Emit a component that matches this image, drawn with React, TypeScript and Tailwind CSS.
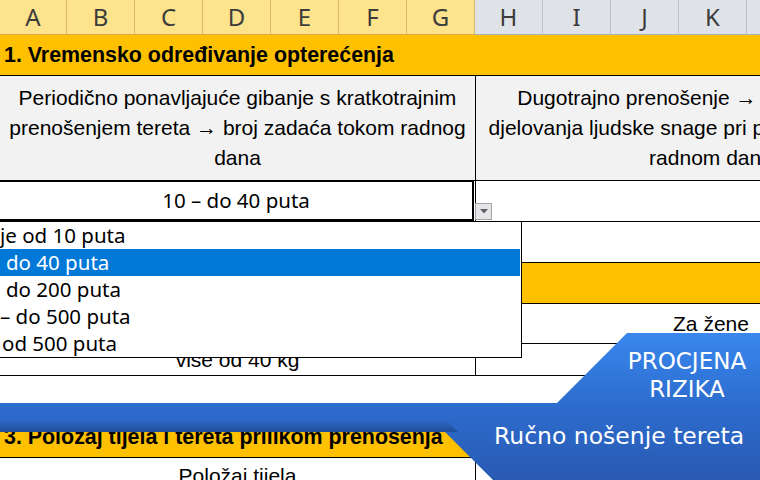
const COLS = ["A", "B", "C", "D", "E", "F", "G", "H", "I", "J", "K", "L"];
const SELECTED = 7;

const OPTIONS = [
	{ label: "je od 10 puta", pad: "pl-0", active: false },
	{ label: "do 40 puta", pad: "pl-[6px]", active: true },
	{ label: "do 200 puta", pad: "pl-[6px]", active: false },
	{ label: "– do 500 puta", pad: "pl-0", active: false },
	{ label: "od 500 puta", pad: "pl-[2px]", active: false },
];

function ColumnHeaders() {
	return (
		<div className="flex h-[35px] font-['Noto_Sans',sans-serif] text-[24px] text-[#3c3c3c]">
			{COLS.map((c, i) => (
				<div
					key={c}
					className={
						i < SELECTED
							? `flex shrink-0 items-center justify-center border-r border-b border-r-[#dcb66a] border-b-[#dca844] bg-[#fde48c] ${i === 0 ? "w-[67px]" : "w-[68px]"}`
							: "flex w-[68px] shrink-0 items-center justify-center border-r border-b border-r-[#bcc2ca] border-b-[#a9b1bb] bg-[#dfe3e8]"
					}
				>
					{c}
				</div>
			))}
		</div>
	);
}

function Banner() {
	return (
		<>
			<svg
				className="pointer-events-none absolute top-0 left-0"
				width="760"
				height="480"
				viewBox="0 0 760 480"
			>
				<defs>
					<linearGradient id="bn" x1="0" y1="333" x2="0" y2="480" gradientUnits="userSpaceOnUse">
						<stop offset="0" stopColor="#3987ed" />
						<stop offset="0.48" stopColor="#2d6dcf" />
						<stop offset="1" stopColor="#295ab2" />
					</linearGradient>
					<linearGradient id="sh" x1="0" y1="420" x2="0" y2="432" gradientUnits="userSpaceOnUse">
						<stop offset="0" stopColor="#102850" stopOpacity="0" />
						<stop offset="1" stopColor="#102850" stopOpacity="0.4" />
					</linearGradient>
				</defs>
				<polygon
					points="0,403 557,403 627,333 760,333 760,480 493,480 445,432 0,432"
					fill="url(#bn)"
				/>
				<polygon points="0,420 446,420 458,432 0,432" fill="url(#sh)" />
			</svg>
			<div className="absolute top-[347px] left-[607px] flex w-[160px] flex-col items-center font-['DejaVu_Sans',sans-serif] text-[23px] leading-[28px] text-white">
				<span>PROCJENA</span>
				<span>RIZIKA</span>
			</div>
			<div className="absolute top-[422px] left-[494px] font-['DejaVu_Sans',sans-serif] text-[23.5px] leading-[28px] whitespace-nowrap text-white">
				Ručno nošenje tereta
			</div>
		</>
	);
}

export default function App() {
	return (
		<div className="relative h-[480px] w-[760px] overflow-hidden bg-white font-['Liberation_Sans',Arial,sans-serif] text-[21px] text-black">
			<ColumnHeaders />

			<div className="flex h-[41px] items-center border-b border-black bg-[#ffc000] pl-[4px] text-[21.4px] font-bold whitespace-nowrap">
				1. Vremensko određivanje opterećenja
			</div>

			<div className="flex h-[105px] border-b border-black bg-[#f2f2f2] leading-[30px] whitespace-nowrap">
				<div className="flex w-[476px] shrink-0 items-center justify-center border-r border-black text-center">
					<div>
						Periodično ponavljajuće gibanje s kratkotrajnim
						<br />
						prenošenjem tereta → broj zadaća tokom radnog
						<br />
						dana
					</div>
				</div>
				<div className="flex w-[470px] shrink-0 items-center justify-center text-center">
					<div>
						Dugotrajno prenošenje → vrijeme trajanja
						<br />
						djelovanja ljudske snage pri prenošenju tereta u
						<br />
						radnom danu
					</div>
				</div>
			</div>

			<div className="flex h-[41px] border-b border-black">
				<div className="w-[476px] shrink-0 border-r border-black">
					<div className="flex h-full w-[474px] items-center justify-center border-2 border-t-[1px] border-l-0 border-black font-['Noto_Sans',sans-serif] text-[20.5px]">
						10 – do 40 puta
					</div>
				</div>
				<div className="flex-1" />
			</div>

			<div className="flex h-[41px] border-b border-black">
				<div className="w-[476px] shrink-0 border-r border-black" />
			</div>

			<div className="h-[41px] border-b border-black bg-[#ffc000]" />

			<div className="flex h-[40px] border-b border-black">
				<div className="w-[476px] shrink-0 border-r border-black" />
				<div className="flex w-[470px] shrink-0 items-center justify-center">Za žene</div>
			</div>

			<div className="flex h-[32px] border-b border-black">
				<div className="flex w-[476px] shrink-0 items-center justify-center border-r border-black">
					više od 40 kg
				</div>
			</div>

			<div className="h-[41px] border-b border-black" />

			<div className="flex h-[41px] items-center border-b border-black bg-[#ffc000] pl-[4px] text-[21.4px] font-bold whitespace-nowrap">
				3. Položaj tijela i tereta prilikom prenošenja
			</div>

			<div className="flex h-[36px]">
				<div className="flex w-[476px] shrink-0 items-center justify-center border-r border-black">
					Položaj tijela
				</div>
			</div>

			<div className="absolute top-[203px] left-[475px] flex h-[17px] w-[17px] items-center justify-center border border-[#a3a3a3] bg-[#e6e6ea]">
				<svg width="8" height="5" viewBox="0 0 8 5">
					<polygon points="0,0 8,0 4,4.5" fill="#606066" />
				</svg>
			</div>

			<div className="absolute top-[221px] left-[-1px] w-[523px] border border-black bg-white font-['Noto_Sans',sans-serif] text-[20.5px]">
				{OPTIONS.map((o) => (
					<div
						key={o.label}
						className={`flex h-[27px] items-center whitespace-nowrap ${o.pad} ${o.active ? "mr-[1px] bg-[#0078d7] text-white" : ""}`}
					>
						{o.label}
					</div>
				))}
			</div>

			<Banner />
		</div>
	);
}
